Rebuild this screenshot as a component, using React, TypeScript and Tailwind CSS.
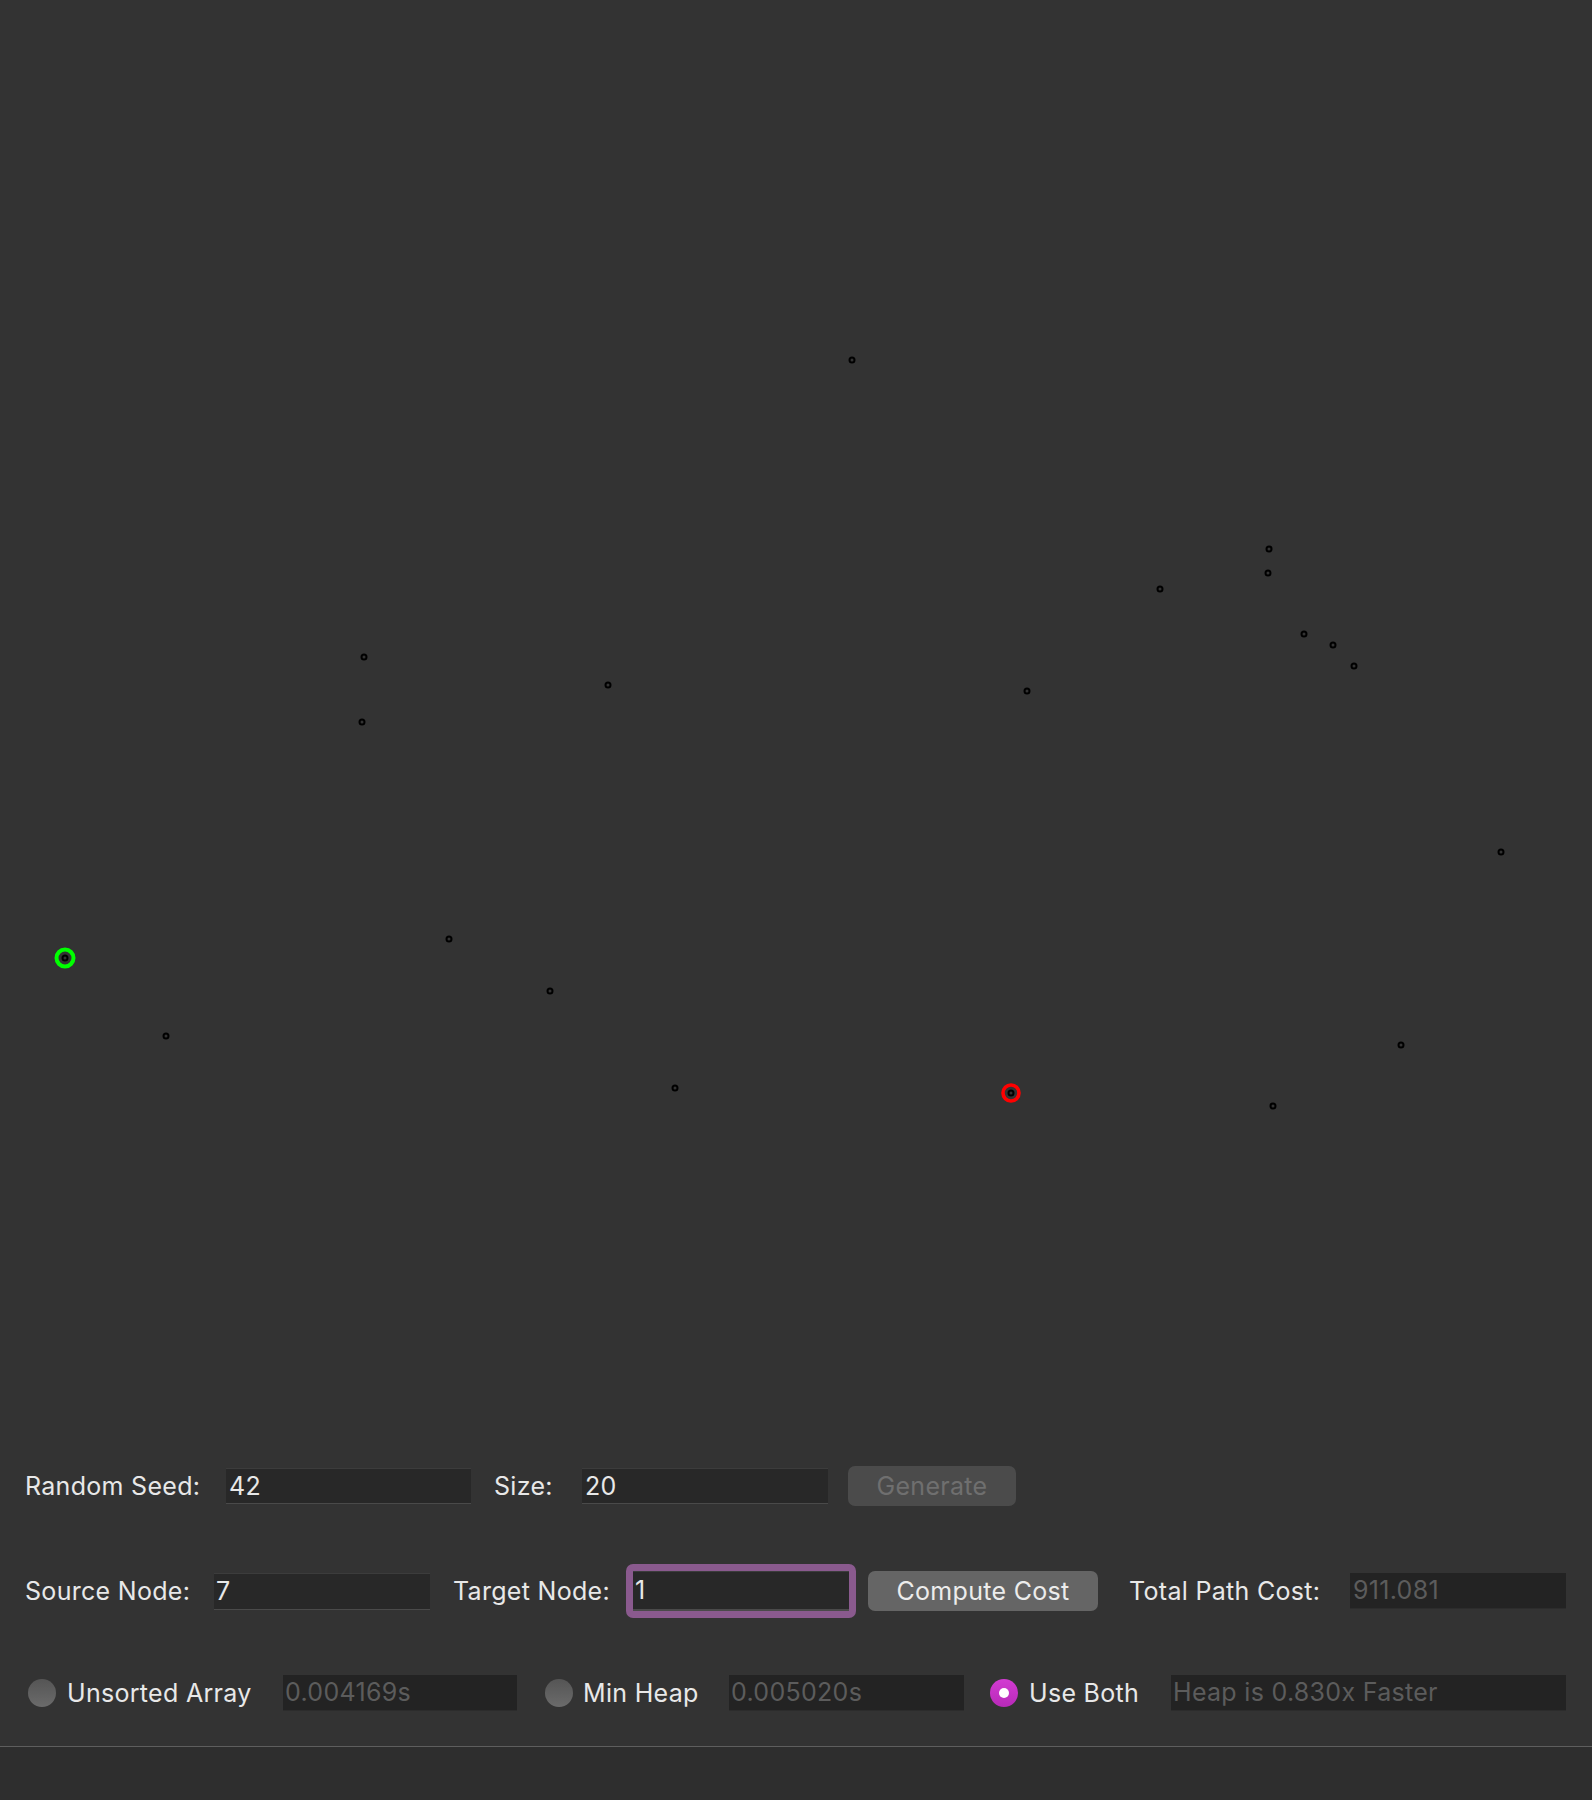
import React from "react";

const nodes: [number, number][] = [
  [852, 360],
  [1269, 549],
  [1268, 573],
  [1160, 589],
  [1304, 634],
  [1333, 645],
  [1354, 666],
  [364, 657],
  [608, 685],
  [1027, 691],
  [362, 722],
  [1501, 852],
  [449, 939],
  [550, 991],
  [166, 1036],
  [675, 1088],
  [1401, 1045],
  [1273, 1106],
  [65, 958],
  [1011, 1093],
];

const font = { fontFamily: 'Inter, "Liberation Sans", Arial, sans-serif' };

function Radio({ checked }: { checked?: boolean }) {
  if (checked) {
    return (
      <div className="w-[28px] h-[28px] rounded-full bg-gradient-to-b from-[#d23bd2] to-[#b82ab8] flex items-center justify-center shrink-0">
        <div className="w-[10px] h-[10px] rounded-full bg-white" />
      </div>
    );
  }
  return (
    <div className="w-[28px] h-[28px] rounded-full bg-gradient-to-b from-[#555555] to-[#6b6b6b] shrink-0" />
  );
}

export default function App() {
  return (
    <div
      className="w-[1592px] h-[1800px] bg-[#333333] flex flex-col text-[25px] tracking-[0.3px] text-[#e8e8e8] leading-none"
      style={font}
    >
      <div className="h-[1466px] relative shrink-0">
        <svg width="1592" height="1466" className="absolute inset-0">
          {nodes.map(([x, y], i) => (
            <circle key={i} cx={x} cy={y} r={2.5} fill="none" stroke="#000" strokeWidth={2} />
          ))}
          <circle cx={65} cy={958} r={8.5} fill="none" stroke="#00ff00" strokeWidth={4} />
          <circle cx={1011} cy={1093} r={8} fill="none" stroke="#ff0000" strokeWidth={3.6} />
        </svg>
      </div>

      {/* Row 1 */}
      <div className="h-[40px] flex items-center pl-[25px] shrink-0">
        <span className="w-[201px]">Random Seed:</span>
        <div className="w-[245px] h-[36px] bg-[#282828] border-t border-t-[#3c3c3c] border-b border-b-[#4a4a4a] flex items-center pl-[3px]">
          42
        </div>
        <span className="w-[88px] ml-[23px]">Size:</span>
        <div className="w-[246px] h-[36px] bg-[#282828] border-t border-t-[#3c3c3c] border-b border-b-[#4a4a4a] flex items-center pl-[3px]">
          20
        </div>
        <div className="ml-[20px] w-[168px] h-[40px] rounded-[7px] bg-[#4b4b4b] text-[#6f6f6f] flex items-center justify-center">
          Generate
        </div>
      </div>

      {/* Row 2 */}
      <div className="mt-[58px] h-[54px] flex items-center pl-[25px] shrink-0">
        <span className="w-[189px]">Source Node:</span>
        <div className="w-[216px] h-[37px] bg-[#282828] border-t border-t-[#3c3c3c] border-b border-b-[#4a4a4a] flex items-center pl-[2px]">
          7
        </div>
        <span className="w-[173px] ml-[23px]">Target Node:</span>
        <div className="w-[230px] h-[54px] rounded-[7px] bg-[#8a5a8e] p-[7px]">
          <div className="w-full h-full bg-[#282828] border-t border-t-[#3c3c3c] border-b-2 border-b-[#4a4a4a] flex items-center pl-[2px]">
            1
          </div>
        </div>
        <div className="ml-[12px] w-[230px] h-[40px] rounded-[7px] bg-[#656565] text-[#ececec] flex items-center justify-center">
          Compute Cost
        </div>
        <span className="w-[221px] ml-[31px]">Total Path Cost:</span>
        <div className="w-[216px] h-[36px] bg-[#232323] border-b border-b-[#2c2c2c] flex items-center pl-[3px] text-[#5c5c5c]">
          911.081
        </div>
      </div>

      {/* Row 3 */}
      <div className="mt-[57px] h-[36px] flex items-center shrink-0">
        <div className="ml-[28px]">
          <Radio />
        </div>
        <span className="ml-[11px] w-[216px]">Unsorted Array</span>
        <div className="w-[234px] h-[36px] bg-[#232323] border-b border-b-[#2c2c2c] flex items-center pl-[2px] text-[#5c5c5c]">
          0.004169s
        </div>
        <div className="ml-[28px]">
          <Radio />
        </div>
        <span className="ml-[10px] w-[146px]">Min Heap</span>
        <div className="w-[235px] h-[36px] bg-[#232323] border-b border-b-[#2c2c2c] flex items-center pl-[2px] text-[#5c5c5c]">
          0.005020s
        </div>
        <div className="ml-[26px]">
          <Radio checked />
        </div>
        <span className="ml-[11px] w-[142px]">Use Both</span>
        <div className="w-[395px] h-[36px] bg-[#232323] border-b border-b-[#2c2c2c] flex items-center pl-[2px] text-[#5c5c5c]">
          Heap is 0.830x Faster
        </div>
      </div>

      <div className="mt-[35px] h-[1px] bg-[#5e5e5e] shrink-0" />
      <div className="flex-1 bg-[#2e2e2e]" />
    </div>
  );
}
